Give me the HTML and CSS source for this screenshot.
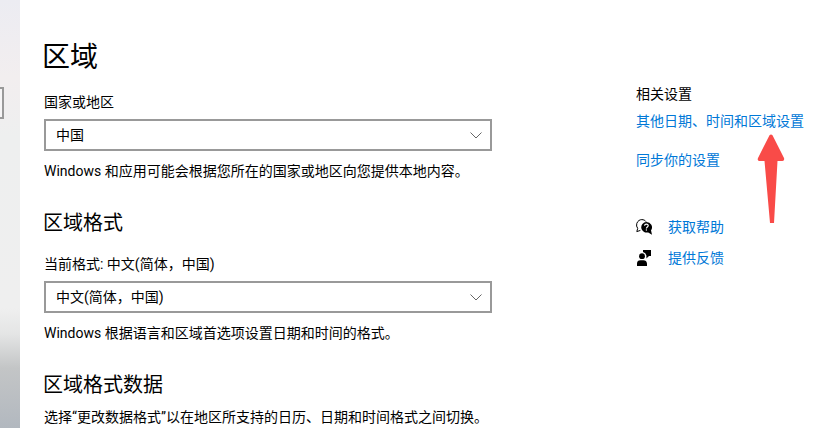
FILE: index.html
```html
<!DOCTYPE html>
<html lang="zh-CN">
<head>
  <meta charset="UTF-8">
  <title>区域</title>
  <link rel="stylesheet" href="styles.css">
</head>
<body>
  <div class="page">
    <aside class="sidebar">
      <input class="sidebar-search" type="text" aria-label="查找设置">
    </aside>

    <main class="content">
      <h1>区域</h1>
      <label for="country">国家或地区</label>
      <div class="dropdown">
        <select id="country">
          <option>中国</option>
        </select>
        <svg class="chevron" viewBox="0 0 12 7"><path d="M0.5 0.5 L6 6 L11.5 0.5"/></svg>
      </div>
      <p>Windows 和应用可能会根据您所在的国家或地区向您提供本地内容。</p>

      <h2>区域格式</h2>
      <label for="format">当前格式: 中文(简体，中国)</label>
      <div class="dropdown">
        <select id="format">
          <option>中文(简体，中国)</option>
        </select>
        <svg class="chevron" viewBox="0 0 12 7"><path d="M0.5 0.5 L6 6 L11.5 0.5"/></svg>
      </div>
      <p>Windows 根据语言和区域首选项设置日期和时间的格式。</p>

      <h2>区域格式数据</h2>
      <p>选择“更改数据格式”以在地区所支持的日历、日期和时间格式之间切换。</p>
    </main>

    <aside class="related">
      <h3>相关设置</h3>
      <div class="pointed">
        <a href="#">其他日期、时间和区域设置</a>
        <svg class="arrow" viewBox="0 0 28 90">
          <path d="M12.5 1.2 Q14 -0.4 15.5 1.2 L27 24 Q27.8 26.6 25.4 27 L20.5 27 L17 89 L13 89 L7.5 27 L2.2 27 Q0 26.6 1 24 Z"/>
        </svg>
      </div>
      <a href="#">同步你的设置</a>

      <ul class="support">
        <li>
          <svg class="icon" viewBox="0 0 16 16">
            <path d="M4.4 11.4 L0.8 12.6 L1.7 9.4 A5.4 5.4 0 0 1 0.8 4.4 C1.8 1.6 4 0.6 5.8 0.6 C7.6 0.6 9.2 1.4 10 2.6" fill="none" stroke="#000"/>
            <path d="M10.4 3 A5.5 5.3 0 0 1 15 11.3 L16 15.8 L12.2 13.4 A5.5 5.3 0 1 1 10.4 3 Z"/>
            <path d="M8.6 6.7 C8.6 4.5 12.2 4.5 12.2 6.6 C12.2 8 10.4 7.9 10.4 9.5" fill="none" stroke="#fff" stroke-width="1.2"/>
            <rect x="9.8" y="10.4" width="1.2" height="1.2" fill="#fff"/>
          </svg>
          <a href="#">获取帮助</a>
        </li>
        <li>
          <svg class="icon" viewBox="0 0 16 16">
            <circle cx="6" cy="6.2" r="2.9"/>
            <path d="M1 16 V13.6 Q1 10.2 4.6 10.2 H7.4 Q10.6 10.2 11 13.6 V16 Z"/>
            <path d="M7 0 H15 V6 H13 L10.4 8.4 V5.6 Q9.8 2.8 7 2 Z"/>
          </svg>
          <a href="#">提供反馈</a>
        </li>
      </ul>
    </aside>
  </div>
</body>
</html>
```

FILE: styles.css
```css
* { box-sizing: border-box; }
body { margin: 0; background: #fff; color: #000; font: 14px/20px Roboto, "Noto Sans CJK SC", sans-serif; }
h1, h2, h3, p, ul { margin: 0; padding: 0; font-weight: normal; }
a { color: #0078d7; text-decoration: none; }

.page { display: flex; min-height: 100vh; }

.sidebar { flex: 0 0 20px; overflow: hidden; padding-top: 87px; background: linear-gradient(#ececf2 0%, #f2eeef 18%, #eeefef 32%, #efefef 72%, #e4e5e5 78%, #c3c5c6 86%, #b2b8bf 100%); }
.sidebar-search { display: block; width: 240px; height: 32px; margin-left: -236px; border: 2px solid #999; background: #f6f5f6; }

.content { flex: 0 1 472px; padding: 40px 0 0 24px; }
h1 { font-size: 28px; line-height: 36px; margin: 0 0 16px -2px; }
h2 { font-size: 20px; line-height: 28px; margin: 28px 0 17px -1px; }
h2:last-of-type { margin-bottom: 8px; }
label { display: block; }
p { white-space: nowrap; }

.dropdown { position: relative; margin: 7px 0 10px; }
select { display: block; width: 100%; height: 32px; padding: 0 32px 0 10px; border: 2px solid #999; border-radius: 0; background: #fff; color: #000; font: inherit; appearance: none; }
.chevron { position: absolute; right: 10px; top: 13px; width: 12px; height: 7px; fill: none; stroke: #666; pointer-events: none; }

.related { flex: 1; padding: 84px 0 0 144px; white-space: nowrap; }
h3 { font-size: 14px; line-height: 20px; margin-bottom: 7px; }
.pointed { position: relative; width: fit-content; margin-bottom: 19px; }
.arrow { position: absolute; left: 121px; top: 23px; width: 28px; height: 90px; fill: #f94b48; }

.support { list-style: none; margin-top: 47px; }
.support li { display: flex; align-items: center; gap: 16px; margin-bottom: 11px; }
.icon { width: 16px; height: 16px; }
```
